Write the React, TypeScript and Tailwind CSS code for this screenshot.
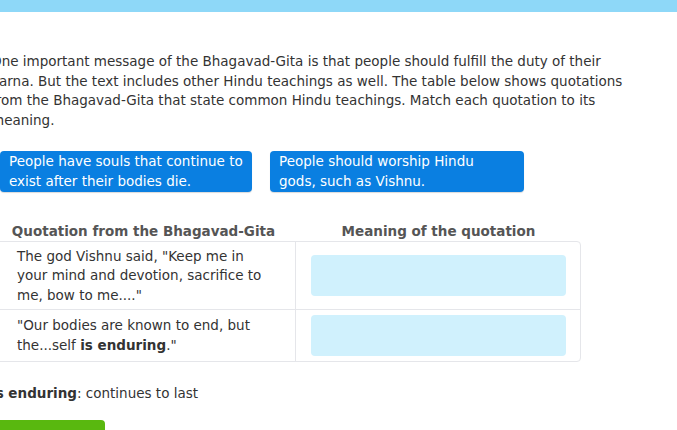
import React from 'react';

const font = { fontFamily: '"DejaVu Sans", Verdana, sans-serif' };

export default function App() {
  return (
    <div className="min-h-screen bg-white text-[13.5px] leading-[19.5px] text-[#333]" style={font}>
      {/* top bar */}
      <div className="h-[12px] bg-[#8ed8f8]" />

      <div className="-ml-[9px] pt-[40px]">
        <p className="w-[640px]">
          One important message of the Bhagavad-Gita is that people should fulfill the duty of their
          varna. But the text includes other Hindu teachings as well. The table below shows quotations
          from the Bhagavad-Gita that state common Hindu teachings. Match each quotation to its
          meaning.
        </p>

        {/* answer tiles */}
        <div className="mt-[21px] ml-[9px] flex gap-[18px]">
          <div className="w-[252px] rounded-[4px] bg-[#0a7fe1] py-[1px] pl-[9px] pr-[8px] text-white shadow-[0_1px_1px_rgba(0,0,0,0.15)]">
            People have souls that continue to exist after their bodies die.
          </div>
          <div className="w-[254px] rounded-[4px] bg-[#0a7fe1] py-[1px] pl-[9px] pr-[12px] text-white shadow-[0_1px_1px_rgba(0,0,0,0.15)]">
            People should worship Hindu gods, such as Vishnu.
          </div>
        </div>

        {/* table */}
        <div className="mt-[30px] w-[590px]">
          <div className="-mb-[1px] flex font-bold text-[#555]">
            <div className="w-[305px] text-center">Quotation from the Bhagavad-Gita</div>
            <div className="w-[285px] text-center">Meaning of the quotation</div>
          </div>
          <div className="rounded-[4px] border border-[#e5e6ea]">
            <div className="flex border-b border-[#e5e6ea]">
              <div className="w-[304px] border-r border-[#e5e6ea] pt-[5px] pb-[4px] pl-[25px] pr-[28px]">
                The god Vishnu said, "Keep me in your mind and devotion, sacrifice to me, bow to me...."
              </div>
              <div className="flex flex-1 items-center pl-[15px] pr-[14px]">
                <div className="h-[41px] w-full rounded-[4px] bg-[#d0f1fd]" />
              </div>
            </div>
            <div className="flex">
              <div className="w-[304px] border-r border-[#e5e6ea] py-[6px] pl-[25px] pr-[28px]">
                "Our bodies are known to end, but the...self <b>is enduring</b>."
              </div>
              <div className="flex flex-1 items-center pl-[15px] pr-[14px]">
                <div className="h-[41px] w-full rounded-[4px] bg-[#d0f1fd]" />
              </div>
            </div>
          </div>
        </div>

        <p className="mt-[22px]">
          <b>is enduring</b>: continues to last
        </p>

        <button className="mt-[16px] flex h-[34px] w-[114px] items-center justify-center rounded-[4px] bg-[#59b80f] font-bold text-white">
          Submit
        </button>
      </div>
    </div>
  );
}
